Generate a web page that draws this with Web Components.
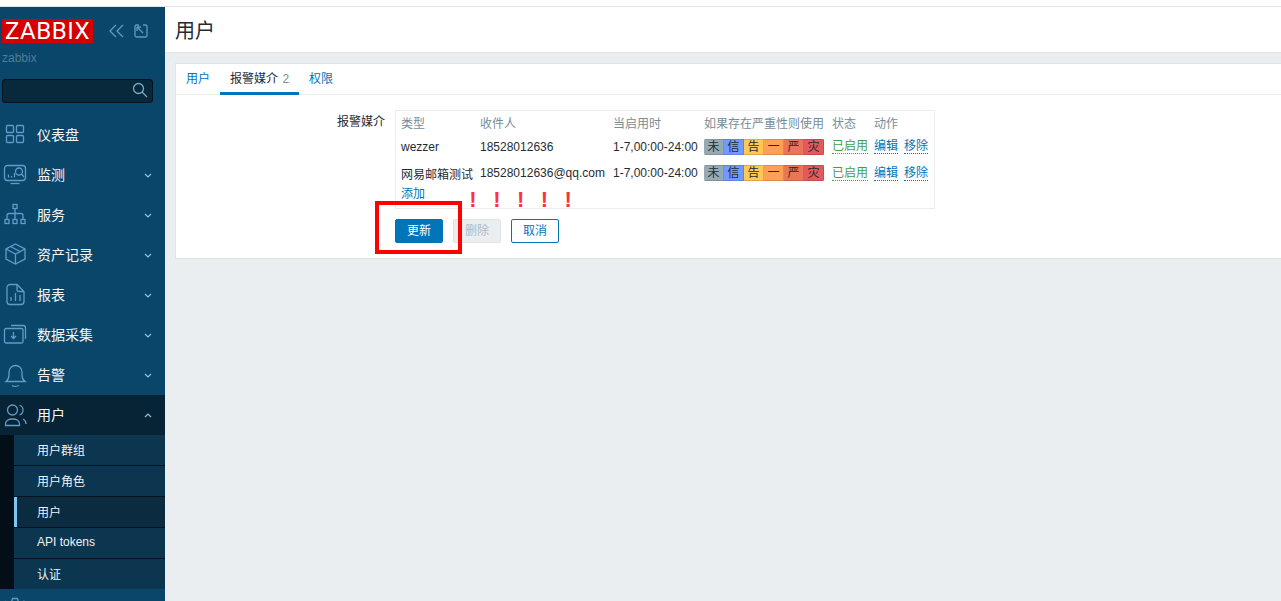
<!DOCTYPE html>
<html lang="zh">
<head>
<meta charset="utf-8">
<title>用户</title>
<style>
  html, body { margin: 0; height: 100%; overflow: hidden; background: #ebeef0; }
  body { font: 12px "Liberation Sans", "Noto Sans CJK SC", sans-serif; color: #1f2c33; }
</style>
</head>
<body>
<zbx-app>
  <zbx-sidebar slot="side">
    <zbx-nav-item icon="grid">仪表盘</zbx-nav-item>
    <zbx-nav-item icon="monitor" expandable>监测</zbx-nav-item>
    <zbx-nav-item icon="services" expandable>服务</zbx-nav-item>
    <zbx-nav-item icon="box" expandable>资产记录</zbx-nav-item>
    <zbx-nav-item icon="report" expandable>报表</zbx-nav-item>
    <zbx-nav-item icon="collect" expandable>数据采集</zbx-nav-item>
    <zbx-nav-item icon="bell" expandable>告警</zbx-nav-item>
    <zbx-nav-item icon="users" expandable open>用户</zbx-nav-item>
    <zbx-sub-menu>
      <zbx-sub-item>用户群组</zbx-sub-item>
      <zbx-sub-item>用户角色</zbx-sub-item>
      <zbx-sub-item selected>用户</zbx-sub-item>
      <zbx-sub-item>API tokens</zbx-sub-item>
      <zbx-sub-item last>认证</zbx-sub-item>
    </zbx-sub-menu>
    <zbx-nav-item icon="gear"></zbx-nav-item>
  </zbx-sidebar>

  <zbx-header slot="head">用户</zbx-header>

  <zbx-card slot="main">
    <zbx-tabs>
      <zbx-tab>用户</zbx-tab>
      <zbx-tab active count="2">报警媒介</zbx-tab>
      <zbx-tab>权限</zbx-tab>
    </zbx-tabs>
    <zbx-form label="报警媒介">
      <zbx-media-table>
        <zbx-media-row head>
          <span>类型</span><span>收件人</span><span>当启用时</span><span>如果存在严重性则使用</span><span>状态</span><span>动作</span>
        </zbx-media-row>
        <zbx-media-row>
          <span>wezzer</span><span>18528012636</span><span>1-7,00:00-24:00</span><zbx-severity></zbx-severity>
          <zbx-link dotted green>已启用</zbx-link>
          <zbx-row-actions><zbx-link dotted>编辑</zbx-link><zbx-link dotted>移除</zbx-link></zbx-row-actions>
        </zbx-media-row>
        <zbx-media-row tall>
          <span>网易邮箱测试</span><span>18528012636@qq.com</span><span>1-7,00:00-24:00</span><zbx-severity></zbx-severity>
          <zbx-link dotted green>已启用</zbx-link>
          <zbx-row-actions><zbx-link dotted>编辑</zbx-link><zbx-link dotted>移除</zbx-link></zbx-row-actions>
        </zbx-media-row>
        <zbx-add-row><zbx-link>添加</zbx-link></zbx-add-row>
      </zbx-media-table>
      <zbx-actions>
        <zbx-button primary>更新</zbx-button>
        <zbx-button disabled>删除</zbx-button>
        <zbx-button>取消</zbx-button>
      </zbx-actions>
    </zbx-form>
  </zbx-card>

  <zbx-marks slot="over"></zbx-marks>
</zbx-app>

<script>
// Iconos de la barra lateral, en una caja de 30x30
const ICONS = {
  grid: '<rect x="6.5" y="5.5" width="7" height="7" rx="1"/><rect x="16.5" y="5.5" width="7" height="7" rx="1"/><rect x="6.5" y="15.5" width="7" height="7" rx="1"/><rect x="16.5" y="15.5" width="7" height="7" rx="1"/>',
  monitor: '<path d="M14 20.5H7.5a3 3 0 0 1-3-3v-9a3 3 0 0 1 3-3h15a3 3 0 0 1 3 3v9a3 3 0 0 1-3 3H14"/><path d="M10.5 23.5h9"/><path d="M8.5 14.5v3M11.5 16v1.5M14.5 13v4.5"/><circle cx="19" cy="11.5" r="3.5"/><path d="M21.5 14l2.5 3"/>',
  services: '<rect x="13" y="4.5" width="4" height="4"/><path d="M15 8.5v5M7 19v-3a2 2 0 0 1 2-2.500h12a2 2 0 0 1 2 2.500v3M15 13.500V19"/><rect x="5" y="19.500" width="4" height="4"/><rect x="13" y="19.500" width="4" height="4"/><rect x="21" y="19.500" width="4" height="4"/>',
  box: '<path d="M15.500 4l9.500 5v10l-9.500 5L6 19V9z"/><path d="M6 9l9.500 5L25 9M15.500 14v10M10.500 6.500l9.500 5"/>',
  report: '<path d="M17 4.500H10a3 3 0 0 0-3 3v14a3 3 0 0 0 3 3h11a3 3 0 0 0 3-3V11.500z"/><path d="M17 4.500v5a2 2 0 0 0 2 2h5"/><path d="M11 21v-4M15.500 21v-8M20 21v-6"/>',
  collect: '<rect x="4.500" y="8.500" width="18.500" height="14.500" rx="1.500"/><path d="M11 5.500h12a2.500 2.500 0 0 1 2.500 2.500v11"/><path d="M13.500 12v6.500M11 16l2.500 2.500L16 16"/>',
  bell: '<path d="M6 21.500c2-1.500 3-3 3-6.500v-3a6.500 6.500 0 0 1 13 0v3c0 3.500 1 5 3 6.500z"/><path d="M12 25.500c1.500 1 5 1 7 0"/>',
  users: '<circle cx="12.500" cy="10" r="5"/><path d="M5.500 25.500v-1.500c0-3 3-5 7-5s7 2 7 5v1.500z"/><path d="M19.500 5c2.500 1 3.500 3 3.500 5s-1 4-3.500 5M23 19c2 1 3 2.500 3 5"/>',
  gear: '<circle cx="15" cy="15" r="4"/><path d="M12.500 4.500h5l.8 3.200 2.800 1.200 2.800-1.700 2.500 4.300-2.400 2.200v3l2.400 2.200-2.500 4.300-2.800-1.700-2.800 1.200-.8 3.200h-5l-.8-3.200-2.800-1.200-2.800 1.700-2.500-4.300 2.400-2.200v-3L3.400 11.800l2.500-4.300 2.800 1.700 2.800-1.200z"/>',
};

const define = (name, css, html) => {
  customElements.define(name, class extends HTMLElement {
    connectedCallback() {
      if (this.shadowRoot) return;
      this.attachShadow({ mode: 'open' });
      const body = typeof html === 'function' ? html(this) : html;
      this.shadowRoot.innerHTML = `<style>${css}</style>${body}`;
    }
  });
};

define('zbx-app', `
  :host { display: block; height: 601px; position: relative; overflow: hidden; }
  .top { height: 6px; background: #fff; border-bottom: 1px solid #dfe4e7; }
  .row { display: flex; height: 594px; }
  .side { flex: 0 0 165px; }
  .content { flex: 1; min-width: 0; }
`, `
  <div class="top"></div>
  <div class="row">
    <div class="side"><slot name="side"></slot></div>
    <div class="content"><slot name="head"></slot><slot name="main"></slot></div>
  </div>
  <slot name="over"></slot>
`);

define('zbx-sidebar', `
  :host { display: block; height: 594px; background: #0a466a; overflow: hidden; }
  .brand { display: flex; align-items: center; padding: 12px 0 0 2px; height: 24px; }
  .logo { width: 91px; height: 24px; background: #d40000; color: #fff; font: 24px/24px Roboto, "Liberation Sans", sans-serif; text-align: center; letter-spacing: .5px; }
  .brand svg { fill: none; stroke: #5d9bc5; stroke-width: 1.300; }
  .collapse { margin-left: 15px; }
  .expand { margin-left: 10px; }
  .name { margin: 8px 0 0 2px; line-height: 14px; color: #4d7c99; }
  .search { display: flex; justify-content: flex-end; align-items: center; box-sizing: border-box; width: 151px; height: 24px; margin: 14px 0 12px 2px; background: #08283b; border: 1px solid #04131d; border-radius: 3px; padding: 0 4px 2px 0; }
  .search svg { fill: none; stroke: #78a9c6; stroke-width: 1.300; }
`, `
  <div class="brand">
    <div class="logo">ZABBIX</div>
    <svg class="collapse" width="16" height="14" viewBox="0 0 16 14"><path d="M8 1L2 7l6 6M15 1L9 7l6 6"/></svg>
    <svg class="expand" width="14" height="14" viewBox="0 0 14 14"><path d="M5 1H2.500A1.500 1.500 0 0 0 1 2.500v9A1.500 1.500 0 0 0 2.500 13h9a1.500 1.500 0 0 0 1.500-1.500v-9A1.500 1.500 0 0 0 11.500 1H9"/><path d="M3 3h4M3 3v4M3 3l6 6"/></svg>
  </div>
  <div class="name">zabbix</div>
  <div class="search">
    <svg width="16" height="16" viewBox="0 0 16 16"><circle cx="6.500" cy="6.500" r="5"/><path d="M10 10l5 5"/></svg>
  </div>
  <slot></slot>
`);

define('zbx-nav-item', `
  :host { display: flex; align-items: center; height: 40px; color: #f2f6f8; font-size: 14px; position: relative; }
  :host([open]) { background: #072436; }
  .icon { flex: 0 0 30px; height: 30px; margin-right: 7px; fill: none; stroke: #5f9cc8; stroke-width: 1.300; }
  .text { flex: 1; padding-bottom: 2px; }
  .chev { flex: 0 0 8px; height: 5px; margin-right: 13px; fill: none; stroke: #8fc3df; stroke-width: 1.200; }
  :host([open]) .chev { transform: scaleY(-1); }
`, (el) => `
  <svg class="icon" viewBox="0 0 30 30">${ICONS[el.getAttribute('icon')] || ''}</svg>
  <span class="text"><slot></slot></span>
  ${el.hasAttribute('expandable') ? '<svg class="chev" viewBox="0 0 8 5"><path d="M1 1l3 3 3-3"/></svg>' : ''}
`);

define('zbx-sub-menu', `
  :host { display: block; background: #030f17; padding-left: 14px; }
`, `<slot></slot>`);

define('zbx-sub-item', `
  :host { display: flex; align-items: center; box-sizing: border-box; height: 31px; padding: 0 0 2px 23px; background: #0c3550; color: #eef3f6; border-bottom: 1px solid #04141f; }
  :host([last]) { border-bottom: 0; height: 30px; }
  :host([selected]) { background: #0a2b40; box-shadow: inset 3px 0 0 #7cc6f5; }
`, `<slot></slot>`);

define('zbx-header', `
  :host { display: flex; align-items: center; box-sizing: border-box; height: 46px; padding: 0 0 1px 10px; background: #fff; border-bottom: 1px solid #dfe4e7; font-size: 20px; color: #1f2c33; }
`, `<slot></slot>`);

define('zbx-card', `
  :host { display: block; box-sizing: border-box; height: 196px; margin: 10px 0 0 10px; background: #fff; border: 1px solid #dfe4e7; border-right: 0; }
`, `<slot></slot>`);

define('zbx-tabs', `
  :host { display: flex; height: 31px; box-sizing: border-box; border-bottom: 1px solid #ebeef0; }
`, `<slot></slot>`);

define('zbx-tab', `
  :host { display: block; box-sizing: border-box; height: 31px; padding: 0 10px; line-height: 30px; color: #0275b8; }
  :host([active]) { color: #1f2c33; border-bottom: 3px solid #0275b8; }
  .count { color: #768d99; margin-left: 1px; }
`, (el) => `<slot></slot>${el.getAttribute('count') ? ` <span class="count">${el.getAttribute('count')}</span>` : ''}`);

define('zbx-form', `
  :host { display: grid; grid-template-columns: 209px 1fr; column-gap: 10px; padding-top: 15px; }
  .label { text-align: right; line-height: 22px; padding-top: 1px; color: #1f2c33; }
`, (el) => `
  <div class="label">${el.getAttribute('label')}</div>
  <div><slot></slot></div>
`);

define('zbx-media-table', `
  :host { display: block; box-sizing: border-box; width: 540px; height: 99px; padding-left: 5px; border: 1px solid #ebeef0; }
`, `<slot></slot>`);

define('zbx-media-row', `
  :host { display: grid; grid-template-columns: 79px 133px 91px 128px 42px 60px; align-items: center; height: 23px; white-space: nowrap; }
  :host([head]) { height: 22px; padding-bottom: 2px; color: #768d99; }
  :host([tall]) { height: 24px; padding-top: 3px; }
`, `<slot></slot>`);

define('zbx-row-actions', `
  :host { display: flex; gap: 6px; }
`, `<slot></slot>`);

define('zbx-add-row', `
  :host { display: block; line-height: 16px; margin-top: 1px; }
`, `<slot></slot>`);

define('zbx-link', `
  :host { color: #0275b8; }
  :host([green]) { color: #429e47; justify-self: start; }
  :host([dotted]) { display: inline-block; line-height: 14px; border-bottom: 1px dotted currentColor; }
`, `<slot></slot>`);

const SEVERITIES = [
  ['未', '#97aab3', '#859097'], ['信', '#7499ff', '#6384de'], ['告', '#ffc859', '#dcaa4c'],
  ['一', '#ffa059', '#de8a4c'], ['严', '#e97659', '#c9664c'], ['灾', '#e45959', '#c44c4c'],
];
define('zbx-severity', `
  :host { display: flex; width: 120px; height: 16px; border-radius: 2px; overflow: hidden; }
  span { flex: 1; box-sizing: border-box; text-align: center; line-height: 14px; border: 1px solid; border-left-width: 0; color: #1f2c33; }
  span:first-child { border-left-width: 1px; }
`, SEVERITIES.map(([t, bg, b]) => `<span style="background:${bg};border-color:${b}">${t}</span>`).join(''));

define('zbx-actions', `
  :host { display: flex; gap: 10px; margin-top: 10px; }
`, `<slot></slot>`);

define('zbx-button', `
  :host { display: block; box-sizing: border-box; width: 48px; height: 24px; line-height: 22px; text-align: center; border: 1px solid #0275b8; border-radius: 2px; color: #0275b8; background: #fff; }
  :host([primary]) { background: #0275b8; color: #fff; }
  :host([disabled]) { background: #ebeef0; border-color: #dfe4e7; color: #acbbc2; }
`, `<slot></slot>`);

// Anotaciones rojas dibujadas encima de la captura
define('zbx-marks', `
  :host { display: block; }
  .box { position: absolute; left: 375px; top: 201px; width: 87px; height: 53px; box-sizing: border-box; border: 4px solid #f00; }
  .bangs { position: absolute; left: 468px; top: 188px; display: flex; gap: 13.800px; color: #fb3340; font: bold 22px/24px "Liberation Sans", sans-serif; }
  .bangs span { width: 10px; text-align: center; }
`, `
  <div class="box"></div>
  <div class="bangs"><span>!</span><span>!</span><span>!</span><span>!</span><span>!</span></div>
`);
</script>
</body>
</html>
